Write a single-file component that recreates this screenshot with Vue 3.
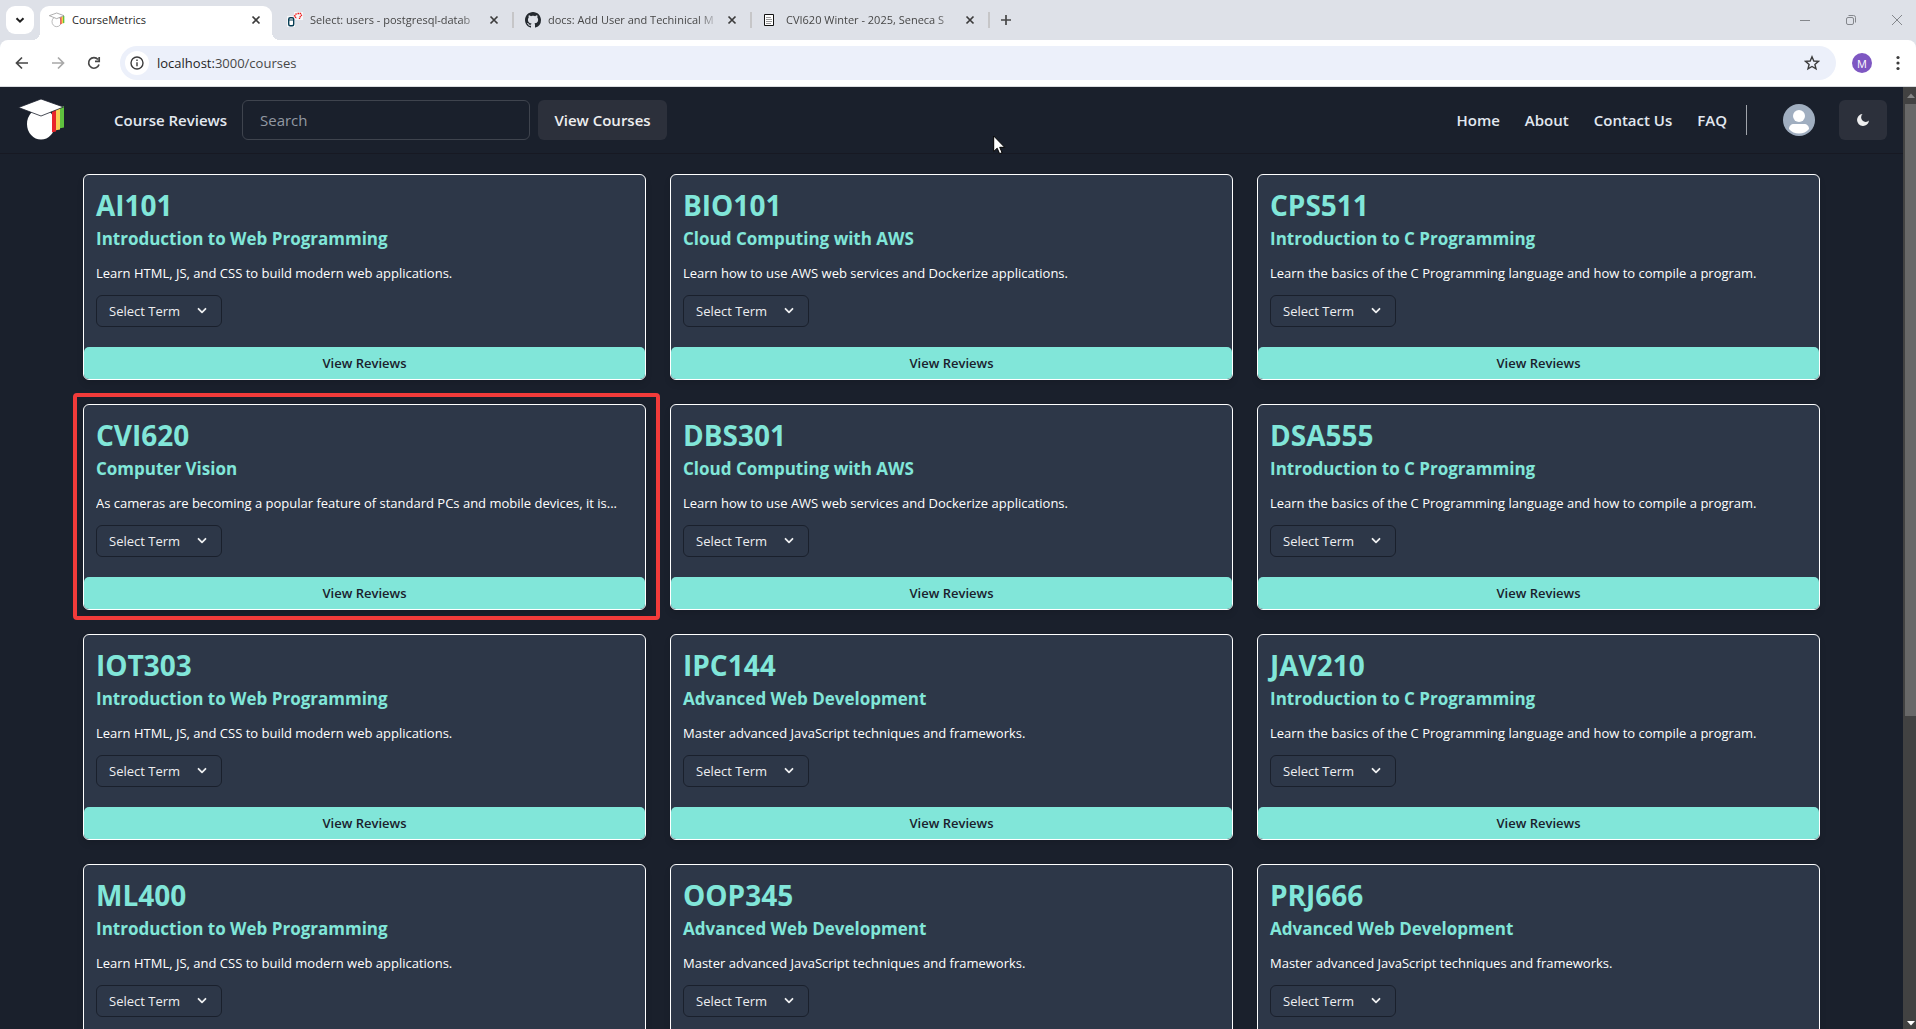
<script setup>
import { ref } from 'vue'

const tabs = [
  { icon: 'cap', title: 'CourseMetrics', active: true },
  { icon: 'db', title: 'Select: users - postgresql-datab' },
  { icon: 'github', title: 'docs: Add User and Techinical M' },
  { icon: 'doc', title: 'CVI620 Winter - 2025, Seneca S' },
]

const url = ref('localhost:3000/courses')

const links = ['Home', 'About', 'Contact Us', 'FAQ']

const WEB = ['Introduction to Web Programming', 'Learn HTML, JS, and CSS to build modern web applications.']
const CLOUD = ['Cloud Computing with AWS', 'Learn how to use AWS web services and Dockerize applications.']
const C = ['Introduction to C Programming', 'Learn the basics of the C Programming language and how to compile a program.']
const ADV = ['Advanced Web Development', 'Master advanced JavaScript techniques and frameworks.']
const VISION = ['Computer Vision', 'As cameras are becoming a popular feature of standard PCs and mobile devices, it is...']

const courses = [
  ['AI101', WEB], ['BIO101', CLOUD], ['CPS511', C],
  ['CVI620', VISION, true], ['DBS301', CLOUD], ['DSA555', C],
  ['IOT303', WEB], ['IPC144', ADV], ['JAV210', C],
  ['ML400', WEB], ['OOP345', ADV], ['PRJ666', ADV],
].map(([code, [name, text], marked]) => ({ code, name, text, marked }))
</script>

<template>
  <div class="window">
    <div class="tabstrip">
      <button class="tab-search" aria-label="Search tabs">
        <svg width="10" height="7" viewBox="0 0 10 7"><path d="M1.500 1.200 5 4.700 8.500 1.200" fill="none" stroke="#1f1f1f" stroke-width="2" /></svg>
      </button>
      <div class="tabs">
        <div v-for="t in tabs" :key="t.title" class="tab" :class="{ active: t.active }">
          <svg v-if="t.icon === 'cap'" class="fav" viewBox="0 0 48 44">
            <ellipse cx="23" cy="27" rx="14" ry="15" fill="#fff" stroke="#999" stroke-width="2" />
            <path d="M34 12h4v22l-4 1z" fill="#e8262b" /><path d="M38 11h4v21l-4 1z" fill="#f7cf46" /><path d="M42 10h4v21l-4 1z" fill="#5fc13e" />
            <path d="M1 9 23 1l22 8-22 9z" fill="#fff" stroke="#888" stroke-width="2" />
          </svg>
          <svg v-else-if="t.icon === 'db'" class="fav" viewBox="0 0 16 16">
            <path d="M0 4h7V0h9v8H8v7H0z" fill="#fff" opacity=".7" />
            <rect x="1.700" y="5.700" width="5" height="8" rx="1.500" fill="#fff" stroke="#063d54" stroke-width="1.400" />
            <path d="M2 8h4.500" stroke="#063d54" />
            <path d="M9.500 1.500 7.500 4l2 2.500M10.500 1.500h3l1 2-2 2v1.500" fill="none" stroke="#f21818" stroke-width="1.300" stroke-dasharray="1.500 .6" />
          </svg>
          <svg v-else-if="t.icon === 'github'" class="fav" viewBox="0 0 16 16">
            <path fill="#24292f" d="M8 0C3.580 0 0 3.580 0 8c0 3.540 2.290 6.530 5.470 7.590.4.070.55-.17.55-.38 0-.19-.01-.82-.01-1.490-2.010.37-2.530-.49-2.690-.94-.09-.23-.48-.94-.82-1.130-.28-.15-.68-.52-.01-.53.63-.01 1.080.58 1.230.82.72 1.210 1.870.87 2.330.66.07-.52.28-.87.51-1.070-1.780-.2-3.640-.89-3.640-3.950 0-.87.31-1.590.82-2.150-.08-.2-.36-1.020.08-2.120 0 0 .67-.21 2.200.82.64-.18 1.320-.27 2-.27s1.360.09 2 .27c1.530-1.040 2.200-.82 2.200-.82.44 1.100.16 1.920.08 2.120.51.56.82 1.270.82 2.150 0 3.070-1.870 3.750-3.650 3.950.29.25.54.73.54 1.480 0 1.070-.01 1.930-.01 2.200 0 .21.15.46.55.38A8.010 8.010 0 0 0 16 8c0-4.420-3.580-8-8-8" />
          </svg>
          <svg v-else class="fav" viewBox="0 0 16 16">
            <path d="M1.500 2.500h9v11h-9z" fill="#fff" stroke="#111" /><path d="M3 5.500h5M3 7.500h6M3 9.500h6M3 11.500h5" stroke="#999" />
          </svg>
          <span class="tab-title">{{ t.title }}</span>
          <button class="tab-close" :aria-label="'Close ' + t.title">
            <svg width="10" height="10" viewBox="0 0 10 10"><path d="m1.500 1.500 7 7m0-7-7 7" stroke="currentColor" stroke-width="1.700" /></svg>
          </button>
        </div>
      </div>
      <button class="new-tab" aria-label="New tab">
        <svg width="12" height="12" viewBox="0 0 12 12"><path d="M6 1v10M1 6h10" stroke="#474747" stroke-width="1.700" /></svg>
      </button>
      <div class="controls">
        <button aria-label="Minimize"><svg width="12" height="12" viewBox="0 0 12 12"><path d="M1 6.500h10" stroke="#84878c" /></svg></button>
        <button aria-label="Restore"><svg width="12" height="12" viewBox="0 0 12 12" fill="none" stroke="#84878c"><rect x="1.500" y="3.500" width="7" height="7" rx="1.500" /><path d="M3.500 1.500h5a2 2 0 0 1 2 2v5" /></svg></button>
        <button aria-label="Close window"><svg width="12" height="12" viewBox="0 0 12 12"><path d="m1 1 10 10m0-10L1 11" stroke="#84878c" /></svg></button>
      </div>
    </div>

    <div class="toolbar">
      <button aria-label="Back"><svg width="16" height="16" viewBox="0 0 16 16" fill="none" stroke="#474747" stroke-width="1.700"><path d="M14 8H3M8 2.500 2.500 8 8 13.500" /></svg></button>
      <button aria-label="Forward"><svg width="16" height="16" viewBox="0 0 16 16" fill="none" stroke="#a8a8a8" stroke-width="1.700"><path d="M2 8h11M8 2.500 13.500 8 8 13.500" /></svg></button>
      <button aria-label="Reload"><svg width="16" height="16" viewBox="0 0 16 16" fill="none" stroke="#474747" stroke-width="1.700"><path d="M13 9.500A5.300 5.300 0 1 1 12 4.500M13.200 2v4.300H9" /></svg></button>
      <div class="omnibox">
        <span class="info">
          <svg width="14" height="14" viewBox="0 0 14 14" fill="none" stroke="#3c3c3c" stroke-width="1.400"><circle cx="7" cy="7" r="6" /><path d="M7 6.200v4M7 3.600v1.500" /></svg>
        </span>
        <label class="url">
          <span class="host">localhost:</span><span>3000/courses</span>
          <input v-model="url" class="url-input" aria-label="Address" />
        </label>
        <button class="star" aria-label="Bookmark this page">
          <svg width="16" height="16" viewBox="0 0 16 16"><path d="m8 1.800 1.800 4.200 4.600.4-3.500 3 1.100 4.500L8 11.500l-4 2.400 1.100-4.500-3.500-3 4.600-.4z" fill="none" stroke="#3c3c3c" stroke-width="1.400" /></svg>
        </button>
      </div>
      <button class="profile" aria-label="Profile">M</button>
      <button class="menu" aria-label="Menu"><svg width="4" height="16" viewBox="0 0 4 16" fill="#3c3c3c"><circle cx="2" cy="2.500" r="1.600" /><circle cx="2" cy="8" r="1.600" /><circle cx="2" cy="13.500" r="1.600" /></svg></button>
    </div>

    <div class="viewport">
      <div class="page">
        <header class="site-header">
          <svg class="logo" width="48" height="44" viewBox="0 2 48 44">
            <ellipse cx="24" cy="28" rx="14" ry="15.500" fill="#fff" />
            <path d="M35 13h4v22.500l-4 .8z" fill="#e8262b" /><path d="M39 12h4v21.500l-4 .8z" fill="#f7cf54" /><path d="M43 10h4v21.500l-4 .8z" fill="#5fc13e" />
            <path d="M1.500 11.500 24 3l22.500 8L24 20z" fill="#fff" stroke="#1a202c" stroke-width=".8" />
          </svg>
          <a class="link brand" href="#">Course Reviews</a>
          <input class="search" type="search" placeholder="Search" aria-label="Search" />
          <button class="view-courses">View Courses</button>
          <nav class="nav">
            <a v-for="l in links" :key="l" class="link" href="#">{{ l }}</a>
          </nav>
          <span class="divider"></span>
          <button class="avatar" aria-label="Account">
            <svg width="32" height="32" viewBox="0 0 32 32"><circle cx="16" cy="16" r="16" fill="#a0aec0" /><circle cx="16" cy="12" r="6" fill="#fff" /><path d="M6 25c0-3 2-5 5-5h10c3 0 5 2 5 5-2.500 3-6 4.500-10 4.500S8.500 28 6 25z" fill="#fff" /></svg>
          </button>
          <button class="theme" aria-label="Toggle dark mode">
            <svg width="14" height="14" viewBox="0 0 14 14"><path d="M6.500 1A6 6 0 1 0 13 7.600 4 4 0 0 1 6.500 1z" fill="#eeeeef" /></svg>
          </button>
        </header>

        <main class="grid">
          <article v-for="c in courses" :key="c.code" class="card" :class="{ marked: c.marked }">
            <div class="body">
              <h2>{{ c.code }}</h2>
              <h3>{{ c.name }}</h3>
              <p>{{ c.text }}</p>
              <div class="term">
                <select :aria-label="'Term for ' + c.code"><option>Select Term</option></select>
                <svg width="10" height="8" viewBox="0 0 10 8"><path d="m1.500 1.800 3.500 3.500 3.500-3.500" fill="none" stroke="#edeef0" stroke-width="1.800" stroke-linecap="round" stroke-linejoin="round" /></svg>
              </div>
            </div>
            <button class="reviews">View Reviews</button>
          </article>
        </main>
      </div>
      <div class="scrollbar">
        <svg width="8" height="17" viewBox="0 0 8 17"><path d="M0 11h8L4 6.500z" fill="#858585" /></svg>
        <div class="track"><div class="thumb"></div></div>
        <svg width="8" height="12" viewBox="0 0 8 12"><path d="M0 4h8L4 8.500z" fill="#fff" /></svg>
      </div>
    </div>

    <svg class="cursor" width="13" height="20" viewBox="0 0 13 20"><path d="M.7 1v15.500l3.500-3.300 2.400 5.500 2.500-1.100-2.400-5.300h5z" fill="#fff" stroke="#000" /></svg>
  </div>
</template>

<style>
body {
  margin: 0;
  background: #1a202c;
}
</style>

<style scoped>
* {
  box-sizing: border-box;
}
.window {
  position: relative;
  display: flex;
  flex-direction: column;
  height: 100vh;
  overflow: hidden;
  background: #dee1e8;
  font-family: "Segoe UI", "Open Sans", "Noto Sans", sans-serif;
  color: #fff;
}
button {
  display: grid;
  place-items: center;
  padding: 0;
  border: 0;
  background: none;
  font: inherit;
}
svg {
  display: block;
  flex: none;
}

.tabstrip {
  display: flex;
  align-items: center;
  flex: none;
  height: 40px;
  padding: 0 0 0 6px;
}
.tab-search {
  width: 28px;
  height: 28px;
  margin-right: 3px;
  border-radius: 9px;
  background: #fff;
}
.tabs {
  display: flex;
  height: 40px;
}
.tab {
  position: relative;
  display: flex;
  align-items: center;
  width: 238px;
  padding: 0 11px 0 12px;
  color: #474747;
  font-size: 11px;
}
.tab:not(.active)::after {
  content: "";
  position: absolute;
  top: 12px;
  right: -1px;
  width: 2px;
  height: 16px;
  background: #c6c6c8;
}
.tab.active {
  color: #1f1f1f;
}
.tab.active::before {
  content: "";
  position: absolute;
  inset: 6px 3px 0;
  border-radius: 9px 9px 0 0;
  background: #fff;
}
/* Outward curves where the active tab meets the toolbar */
.tab.active::after {
  content: "";
  position: absolute;
  inset: auto -5px 0;
  height: 8px;
  background:
    radial-gradient(circle at 0 0, transparent 8px, #fff 8px) left / 8px 8px no-repeat,
    radial-gradient(circle at 100% 0, transparent 8px, #fff 8px) right / 8px 8px no-repeat;
}
.tab > * {
  position: relative;
}
.fav {
  width: 16px;
  height: 16px;
}
.tab-title {
  flex: 1;
  margin: 0 5px 0 7px;
  line-height: 20px;
  white-space: nowrap;
}
.tab:not(.active) .tab-title {
  mask-image: linear-gradient(90deg, #000 88%, transparent);
}
.tab-close {
  width: 16px;
  height: 16px;
  color: #3c3c3c;
}
.new-tab {
  width: 28px;
  height: 28px;
  margin-left: 3px;
}
.controls {
  display: flex;
  gap: 8px;
  margin-left: auto;
}
.controls button {
  width: 38px;
  height: 40px;
}

.toolbar {
  display: flex;
  align-items: center;
  gap: 8px;
  flex: none;
  height: 47px;
  padding: 0 4px 0 8px;
  border-bottom: 1px solid #dadce0;
  border-radius: 8px 8px 0 0;
  background: #fff;
}
.toolbar > button {
  width: 28px;
  height: 28px;
}
.omnibox {
  display: flex;
  align-items: center;
  flex: 1;
  height: 34px;
  margin: 0 4px;
  padding: 0 10px 0 5px;
  border-radius: 17px;
  background: #ecf0fa;
}
.info {
  display: grid;
  place-items: center;
  width: 24px;
  height: 24px;
  border-radius: 12px;
  background: #fff;
}
.url {
  position: relative;
  flex: 1;
  margin-left: 8px;
  color: #474747;
  font-size: 13px;
  line-height: 20px;
}
.host {
  color: #1f1f1f;
}
.url-input {
  position: absolute;
  inset: 0;
  width: 100%;
  padding: 0;
  border: 0;
  background: none;
  font: inherit;
  opacity: 0;
}
.star {
  width: 28px;
  height: 28px;
}
.toolbar > .profile {
  width: 20px;
  height: 20px;
  margin: 0 4px;
  border-radius: 10px;
  background: #7e57c2;
  color: #fff;
  font-size: 11px;
}

.viewport {
  display: flex;
  flex: 1;
  min-height: 0;
  background: #1a202c;
}
.page {
  flex: 1;
  min-width: 0;
  overflow: hidden;
}
.site-header {
  display: flex;
  align-items: center;
  height: 67px;
  padding: 0 16px 0 17px;
  border-bottom: 1px solid #171923;
  background: #1a202c;
  font-size: 15px;
  font-weight: 600;
}
.link {
  color: #e2e8f0;
  text-decoration: none;
  white-space: nowrap;
}
.brand {
  width: 112px;
  margin: 0 16px 0 49px;
}
.search {
  width: 288px;
  height: 40px;
  padding: 0 17px;
  border: 1px solid #3f444e;
  border-radius: 6px;
  outline: 0;
  background: none;
  color: #fff;
  font: 400 15px "Segoe UI", "Open Sans", "Noto Sans", sans-serif;
}
.search::placeholder {
  color: #9298a2;
}
.view-courses {
  width: 129px;
  height: 40px;
  margin-left: 8px;
  border-radius: 6px;
  background: #2c303b;
  color: #eeeeef;
}
.nav {
  display: flex;
  gap: 25px;
  margin-left: auto;
}
.divider {
  width: 1px;
  height: 30px;
  margin: 0 36px 0 19px;
  background: #a0a4ab;
}
.theme {
  width: 48px;
  height: 40px;
  margin-left: 24px;
  border-radius: 6px;
  background: #2c303b;
}

.grid {
  display: grid;
  grid-template-columns: repeat(3, minmax(0, 1fr));
  gap: 24px;
  padding: 20px 83px;
}
.card {
  position: relative;
  border: 1px solid #fff;
  border-radius: 6px;
  background: #2d3748;
  box-shadow: 0 4px 6px rgba(0, 0, 0, 0.1);
}
.marked::after {
  content: "";
  position: absolute;
  inset: -12px -15px -11px -11px;
  border: 4px solid #f23b3a;
  border-radius: 4px;
  pointer-events: none;
}
.body {
  padding: 12px 12px 20px;
}
h2,
h3 {
  margin: 0;
  color: #81e6d9;
  font-weight: 700;
}
h2 {
  font-size: 28px;
  line-height: 36px;
}
h3 {
  margin-top: 4px;
  font-size: 17px;
  line-height: 24px;
}
p {
  margin: 12px 0;
  font-size: 13px;
  line-height: 20px;
  overflow: hidden;
  text-overflow: ellipsis;
  white-space: nowrap;
}
.term {
  display: grid;
  align-items: center;
  width: 126px;
}
.term > * {
  grid-area: 1 / 1;
}
.term select {
  height: 32px;
  padding: 0 12px;
  border: 1px solid #1a202c;
  border-radius: 6px;
  appearance: none;
  background: none;
  color: #edeef0;
  font: inherit;
  font-size: 13px;
}
.term svg {
  justify-self: end;
  margin-right: 15px;
  pointer-events: none;
}
.reviews {
  width: 100%;
  height: 32px;
  border-radius: 5px;
  background: #81e6d9;
  color: #1a202c;
  font-size: 13px;
  font-weight: 600;
}

.scrollbar {
  display: flex;
  flex-direction: column;
  align-items: center;
  width: 13px;
  background: #424242;
}
.scrollbar svg {
  margin-left: 3px;
}
.track {
  flex: 1;
  align-self: stretch;
  padding-left: 2px;
}
.thumb {
  height: 67%;
  background: #686868;
}
.cursor {
  position: absolute;
  top: 135px;
  left: 993px;
}
</style>
